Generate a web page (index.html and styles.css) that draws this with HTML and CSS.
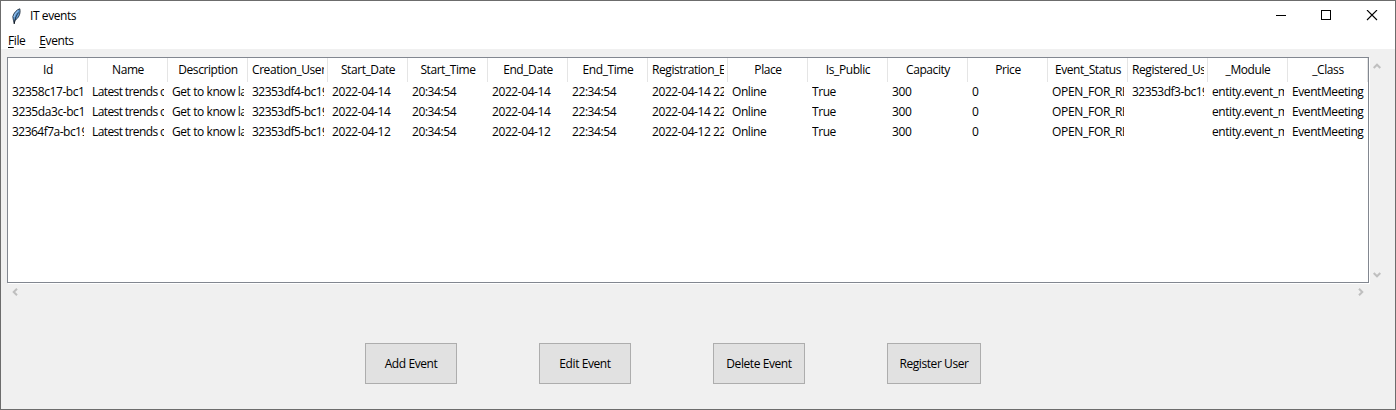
FILE: index.html
```html
<!DOCTYPE html>
<html lang="en">
<head>
<meta charset="utf-8">
<title>IT events</title>
<link rel="stylesheet" href="styles.css">
</head>
<body>
<div class="window">
  <header class="titlebar">
    <svg class="feather" width="11" height="17" viewBox="0 0 11 17">
      <path d="M8.8 .8C6 1.5 2.8 4.8 1.8 8.6L2.4 12.2 3.2 15.5 4 12.2C7.2 10.5 10 6 8.8 .8Z" fill="#5f9bd5" stroke="#26323f" stroke-width=".9"/>
      <path d="M7.6 4.5C5.6 7 4.2 9.6 3.2 16" fill="none" stroke="#0b1018" stroke-width=".8"/>
      <path d="M6.9 2.8C4.8 4.6 3.5 6.6 3 9" fill="none" stroke="#a9cdf0" stroke-width="1"/>
    </svg>
    <span class="title">IT events</span>
    <svg class="controls" width="104" height="11" viewBox="0 0 104 11" shape-rendering="crispEdges">
      <path d="M0 5.5H10" stroke="#000"/>
      <rect x="45.5" y=".5" width="9" height="9" fill="none" stroke="#000"/>
      <path d="M91 0L101 10M101 0L91 10" stroke="#000" stroke-width="1.1" shape-rendering="auto"/>
    </svg>
  </header>
  <nav class="menubar"><span><u>F</u>ile</span><span><u>E</u>vents</span></nav>
  <main class="content">
    <div class="table-row">
      <div class="tree">
        <div class="row head"><span>Id</span><span>Name</span><span>Description</span><span>Creation_User</span><span>Start_Date</span><span>Start_Time</span><span>End_Date</span><span>End_Time</span><span>Registration_End</span><span>Place</span><span>Is_Public</span><span>Capacity</span><span>Price</span><span>Event_Status</span><span>Registered_Users</span><span>_Module</span><span>_Class</span></div>
        <div class="row"><span>32358c17-bc19</span><span class="tight">Latest trends on</span><span>Get to know latest</span><span class="id">32353df4-bc19</span><span>2022-04-14</span><span>20:34:54</span><span>2022-04-14</span><span>22:34:54</span><span>2022-04-14 22:34</span><span>Online</span><span>True</span><span>300</span><span>0</span><span class="status">OPEN_FOR_REG</span><span class="id">32353df3-bc19</span><span>entity.event_meeting</span><span>EventMeeting</span></div>
        <div class="row"><span>3235da3c-bc19</span><span class="tight">Latest trends on</span><span>Get to know latest</span><span class="id">32353df5-bc19</span><span>2022-04-14</span><span>20:34:54</span><span>2022-04-14</span><span>22:34:54</span><span>2022-04-14 22:34</span><span>Online</span><span>True</span><span>300</span><span>0</span><span class="status">OPEN_FOR_REG</span><span></span><span>entity.event_meeting</span><span>EventMeeting</span></div>
        <div class="row"><span class="id">32364f7a-bc19</span><span class="tight">Latest trends on</span><span>Get to know latest</span><span class="id">32353df5-bc19</span><span>2022-04-12</span><span>20:34:54</span><span>2022-04-12</span><span>22:34:54</span><span>2022-04-12 22:34</span><span>Online</span><span>True</span><span>300</span><span>0</span><span class="status">OPEN_FOR_REG</span><span></span><span>entity.event_meeting</span><span>EventMeeting</span></div>
      </div>
      <div class="vscroll">
        <svg width="8" height="6" viewBox="0 0 8 6"><path d="M.7 5L4 1.7 7.3 5" class="arrow"/></svg>
        <svg width="8" height="6" viewBox="0 0 8 6"><path d="M.7 1L4 4.3 7.3 1" class="arrow"/></svg>
      </div>
    </div>
    <div class="hscroll">
      <svg width="6" height="8" viewBox="0 0 6 8"><path d="M5 .7L1.7 4 5 7.3" class="arrow"/></svg>
      <svg width="6" height="8" viewBox="0 0 6 8"><path d="M1 .7L4.3 4 1 7.3" class="arrow"/></svg>
    </div>
    <div class="buttons">
      <button>Add Event</button><button>Edit Event</button><button>Delete Event</button><button class="register">Register User</button>
    </div>
  </main>
</div>
</body>
</html>
```
FILE: styles.css
```css
* { box-sizing: border-box; }
body {
  margin: 0;
  color: #000;
  font: 12px/20px "Open Sans", "Noto Sans", sans-serif;
  letter-spacing: -0.42px;
}
.window {
  width: 1396px;
  height: 410px;
  border: 1px solid #6c6c6c;
  background: #f0f0f0;
  display: flex;
  flex-direction: column;
}
.titlebar {
  height: 30px;
  background: #fff;
  display: flex;
  align-items: center;
  padding: 0 15px 0 10px;
}
.title { margin-left: 8px; }
.controls { margin: -2px 0 0 auto; }
.menubar {
  height: 18px;
  background: #fff;
  display: flex;
  gap: 14px;
  padding-left: 7px;
}
.menubar u { text-underline-offset: 2px; }
.content { padding: 8px 0 0 6px; }
.table-row { display: flex; }
.tree {
  width: 1362px;
  height: 226px;
  border: 1px solid #828790;
  background: #fff;
  box-shadow: 1px 1px 0 #fff;
}
.row { display: grid; grid-template-columns: repeat(17, 80px); height: 20px; }
.row span { overflow: hidden; white-space: nowrap; margin: 0 4px; }
.row .id { letter-spacing: -0.52px; }
.row .tight { letter-spacing: -0.6px; }
.row .status { letter-spacing: -0.3px; }
.head {
  height: 24px;
  line-height: 24px;
  text-align: center;
  background: repeating-linear-gradient(to right, transparent 0 79px, #e5e5e5 79px 80px);
}
.vscroll {
  display: flex;
  flex-direction: column;
  justify-content: space-between;
  padding: 6px 0 5px 4px;
}
.hscroll {
  width: 1362px;
  height: 17px;
  display: flex;
  justify-content: space-between;
  align-items: center;
  padding: 0 5px 0 5px;
}
.arrow { fill: none; stroke: #bfbfbf; stroke-width: 2; }
.buttons { display: flex; gap: 82px; padding: 43px 0 0 358px; }
button {
  width: 92px;
  height: 41px;
  padding: 0;
  border: 1px solid #adadad;
  background: #e1e1e1;
  color: #000;
  font: inherit;
  letter-spacing: inherit;
}
.register { width: 94px; }
```
